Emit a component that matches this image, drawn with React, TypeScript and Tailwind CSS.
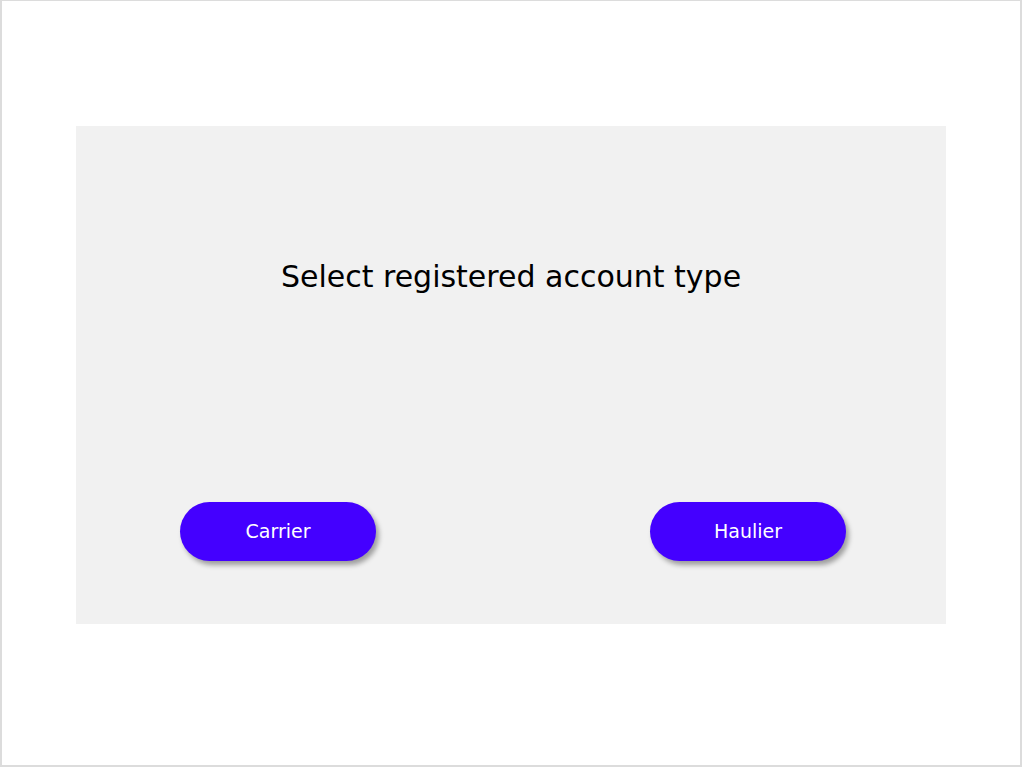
import React from "react";

const AccountButton = ({ label }: { label: string }) => {
  return (
    <button className="w-[196px] h-[59px] rounded-full bg-[#4400ff] text-white text-[19px] shadow-[3px_4px_5px_rgba(0,0,0,0.35)]">
      {label}
    </button>
  );
};

const App = () => {
  return (
    <div className="w-[1022px] h-[767px] bg-white border-t border-l-2 border-r-2 border-b-2 border-[#dcdcdc] pt-[125px] font-['DejaVu_Sans',sans-serif]">
      <div className="mx-auto w-[870px] h-[498px] bg-[#f1f1f1] flex flex-col">
        <h1 className="mt-[131px] text-center text-[30px] font-normal text-black leading-[40px]">
          Select registered account type
        </h1>
        <div className="mt-auto mb-[63px] flex justify-between pl-[104px] pr-[100px]">
          <AccountButton label="Carrier" />
          <AccountButton label="Haulier" />
        </div>
      </div>
    </div>
  );
};

export default App;
